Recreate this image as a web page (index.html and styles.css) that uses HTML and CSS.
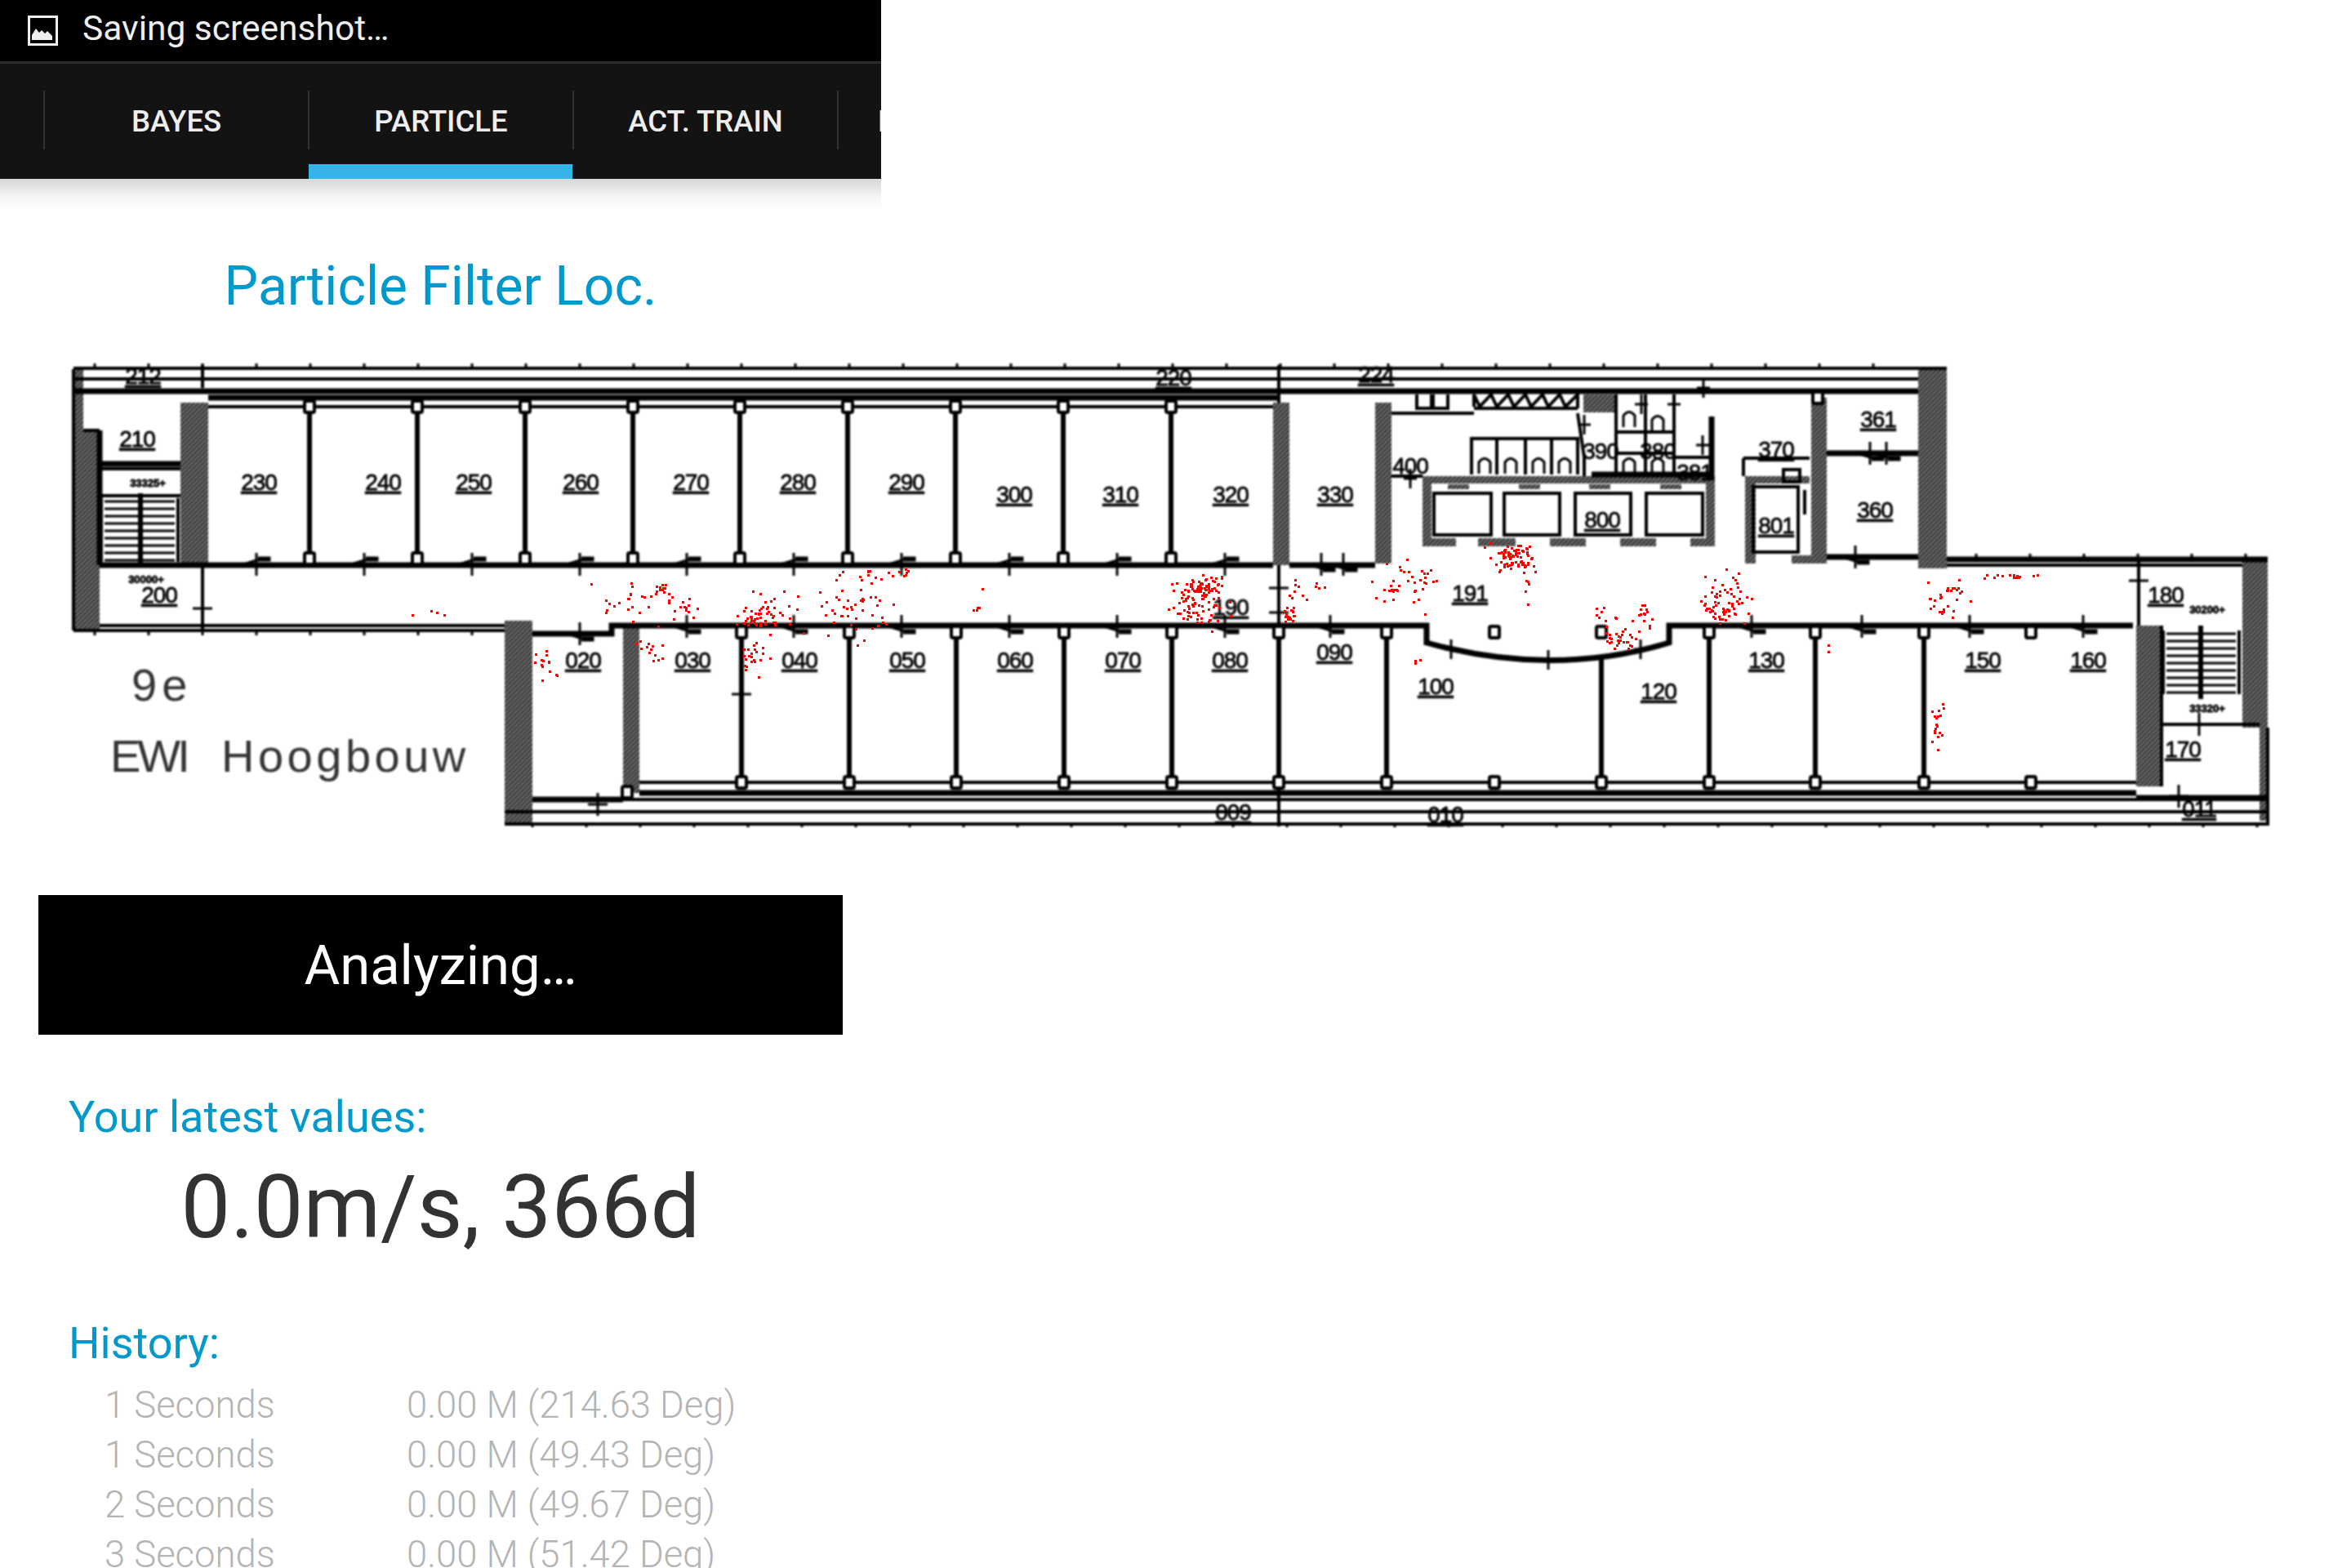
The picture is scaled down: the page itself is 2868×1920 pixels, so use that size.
FILE: index.html
```html
<!DOCTYPE html>
<html lang="en">
<head>
    <meta charset="UTF-8">
    <meta name="viewport" content="width=device-width, initial-scale=1.0">
    <title>Particle Filter Loc.</title>
    <link rel="stylesheet" href="styles.css">
</head>
<body>
<div class="screen">

    <header class="status-bar">
        <svg class="status-icon" viewBox="0 0 37 37">
            <rect x="1.5" y="1.5" width="34" height="34" fill="none" stroke="#eee" stroke-width="3"/>
            <path d="M5 31V25l5-8 4 5 3-3 4 4 3-3 6 6v5z" fill="#eee" transform="translate(0 -1)"/>
        </svg>
        <span>Saving screenshot…</span>
    </header>

    <nav class="tabs">
        <div class="tab">BAYES</div>
        <div class="tab active">PARTICLE</div>
        <div class="tab">ACT. TRAIN</div>
        <div class="tab clipped">RSSI TRAIN</div>
    </nav>
    <div class="tabs-shadow"></div>

    <h1 class="title">Particle Filter Loc.</h1>

    <svg class="plan" viewBox="0 430 2868 600" width="2868" height="600">
        <defs>
            <pattern id="hatch" width="4" height="4" patternUnits="userSpaceOnUse" patternTransform="rotate(45)">
                <rect width="4" height="4" fill="#7a7a7a"/>
                <rect width="2" height="4" fill="#2a2a2a"/>
            </pattern>
        </defs>

        <g class="drawing">
            <!-- hatched walls -->
            <g class="hatch">
                <rect x="90" y="452" width="12" height="75"/>
                <rect x="90" y="527" width="32" height="245"/>
                <rect x="221" y="493" width="34" height="201"/>
                <rect x="618" y="760" width="34" height="249"/>
                <rect x="763" y="766" width="20" height="205"/>
                <rect x="1559" y="493" width="20" height="199"/>
                <rect x="1684" y="493" width="20" height="197"/>
                <rect x="2218" y="487" width="19" height="203"/>
                <rect x="2349" y="451" width="35" height="245"/>
                <rect x="2746" y="688" width="31" height="203"/>
                <rect x="2767" y="891" width="10" height="114"/>
                <rect x="2616" y="766" width="31" height="197"/>
                <rect x="1939" y="483" width="38" height="22"/>
                <rect x="1742" y="583" width="358" height="9"/>
                <rect x="2137" y="583" width="79" height="9"/>
                <rect x="1742" y="592" width="11" height="77"/>
                <rect x="2089" y="592" width="11" height="77"/>
                <rect x="2137" y="592" width="13" height="98"/>
                <rect x="1753" y="659" width="30" height="10"/>
                <rect x="1810" y="659" width="46" height="10"/>
                <rect x="1898" y="659" width="44" height="10"/>
                <rect x="1984" y="659" width="44" height="10"/>
                <rect x="2070" y="659" width="30" height="10"/>
                <rect x="2194" y="680" width="24" height="10"/>
                <rect x="1773" y="593" width="26" height="6"/>
                <rect x="1860" y="593" width="26" height="6"/>
                <rect x="1946" y="593" width="26" height="6"/>
                <rect x="2033" y="593" width="26" height="6"/>
            </g>

            <!-- outer walls and long lines -->
            <path class="line" d="M90 451H2384M90 464H2349M90 772V452M90 772H618M122 766H618M618 1009H2777V891M618 994H2777"/>
            <path class="thick" d="M90 479H2349M255 487H1566M122 692H1559M1579 692H1684"/>
            <path class="line" d="M255 498H1559M652 979H2777M783 958H2616"/>
            <path class="thick" d="M783 971H2616M652 776H749V766H1747V787Q1900 830 2044 787V766H2612"/>
            <path class="line" d="M248 447V475M248 692V772M1566 447V493M1566 692V1012M2619 684V766M1979 483V581"/>
            <path class="thick" d="M2384 685H2777M652 979H763M2616 977H2777"/>
            <path class="line" d="M2384 692H2746M2647 766V963M2647 887H2767"/>

            <!-- rooms 200, 210 and the stairs -->
            <path class="thick" d="M122 568H221M122 692V527"/>
            <path class="line" d="M102 527H122M122 574H221M122 607H221"/>

            <!-- toilets and service rooms -->
            <path class="line" d="M1704 506H1805M1805 500H1932M1704 583H1742"/>
            <path class="line" d="M1805 498V483L1812 498L1826 483L1833 498L1847 483L1854 498L1868 483L1875 498L1889 483L1896 498L1910 483L1917 498L1932 483V500"/>
            <path class="line" d="M1735 483V500H1753V483M1755 483V500H1773V483"/>
            <path class="line" d="M1802 581V537H1932V581M1833 537V581M1868 537V581M1900 537V581M1932 506L1940 560V583"/>
            <path class="line" d="M1979 529H2050M2050 483V581M2015 483V581M1979 555H2050M2050 560H2096"/>
            <path class="thick" d="M2096 510V588M1949 581H2096"/>
            <path class="line" d="M2135 561H2216M2135 561V583M2184 575H2204V590H2184z"/>
            <rect class="box" x="1756" y="604" width="70" height="51"/>
            <rect class="box" x="1842" y="604" width="68" height="51"/>
            <rect class="box" x="1929" y="604" width="68" height="51"/>
            <rect class="box" x="2016" y="604" width="69" height="51"/>
            <rect class="box" x="2147" y="596" width="55" height="80"/>
            <path class="thick" d="M2237 555H2349M2237 682H2349"/>
            <path class="line" d="M2210 600V630"/>

            <g id="repeats"></g>

            <!-- room numbers -->
            <g class="rooms">
                <text x="168" y="547">210</text>
                <text x="195" y="738">200</text>
                <text x="317" y="600">230</text>
                <text x="469" y="600">240</text>
                <text x="580" y="600">250</text>
                <text x="711" y="600">260</text>
                <text x="846" y="600">270</text>
                <text x="977" y="600">280</text>
                <text x="1110" y="600">290</text>
                <text x="1242" y="615">300</text>
                <text x="1372" y="615">310</text>
                <text x="1507" y="615">320</text>
                <text x="1635" y="615">330</text>
                <text x="1507" y="753">190</text>
                <text x="714" y="818">020</text>
                <text x="848" y="818">030</text>
                <text x="979" y="818">040</text>
                <text x="1111" y="818">050</text>
                <text x="1243" y="818">060</text>
                <text x="1375" y="818">070</text>
                <text x="1506" y="818">080</text>
                <text x="1634" y="808">090</text>
                <text x="1758" y="850">100</text>
                <text x="1800" y="736">191</text>
                <text x="2031" y="856">120</text>
                <text x="2163" y="818">130</text>
                <text x="2428" y="818">150</text>
                <text x="2557" y="818">160</text>
                <text x="2652" y="738">180</text>
                <text x="2673" y="927">170</text>
                <text x="2300" y="523">361</text>
                <text x="2296" y="634">360</text>
                <text x="2175" y="560">370</text>
                <text x="2175" y="653">801</text>
                <text x="1962" y="646">800</text>
                <text x="1510" y="1004">009</text>
                <text x="1770" y="1007">010</text>
                <text x="2693" y="1000">011</text>
                <text x="1437" y="472">220</text>
                <text x="1685" y="468">224</text>
                <text x="175" y="470">212</text>
            </g>
            <g class="rooms plain">
                <text x="1727" y="580">400</text>
                <text x="1960" y="562">390</text>
                <text x="2030" y="562">380</text>
                <text x="2075" y="588">381</text>
            </g>
            <g class="rooms tiny">
                <text x="181" y="596">33325+</text>
                <text x="179" y="714">30000+</text>
                <text x="2703" y="751">30200+</text>
                <text x="2703" y="872">33320+</text>
            </g>
            <text class="floor nine" x="161" y="858">9e</text>
            <text class="floor ewi" x="135" y="945">EWI</text>
            <text class="floor" x="271" y="945">Hoogbouw</text>
        </g>

        <g id="particles" fill="#f00"></g>
    </svg>

    <div class="banner">Analyzing…</div>

    <h2 class="label latest">Your latest values:</h2>
    <div class="value">0.0m/s, 366d</div>

    <h2 class="label history">History:</h2>
    <div class="rows">
        <span>1 Seconds</span><span>0.00 M (214.63 Deg)</span>
        <span>1 Seconds</span><span>0.00 M (49.43 Deg)</span>
        <span>2 Seconds</span><span>0.00 M (49.67 Deg)</span>
        <span>3 Seconds</span><span>0.00 M (51.42 Deg)</span>
    </div>

</div>
<script src="plan.js"></script>
</body>
</html>
```

FILE: styles.css
```css
html, body {
    margin: 0;
    padding: 0;
    height: 1920px;
    overflow: hidden;
    background-color: #fff;
}
body {
    font-family: 'Roboto', 'Liberation Sans', sans-serif;
}
.screen {
    width: 1079px;
}

/* status bar */
.status-bar {
    height: 75px;
    background-color: #000;
    border-bottom: 3px solid #2c2c2c;
    color: #eee;
    display: flex;
    align-items: center;
    padding-left: 34px;
    font-size: 42.5px;
    font-weight: 400;
}
.status-bar span {
    margin-top: -6px;
}
.status-icon {
    width: 37px;
    height: 37px;
    margin-right: 30px;
}

/* tabs */
.tabs {
    height: 108px;
    padding: 33px 0 0 53px;
    background-color: #131313;
    display: flex;
    overflow: hidden;
}
.tab {
    position: relative;
    flex: 0 0 324px;
    box-sizing: border-box;
    height: 72px;
    padding-top: 3px;
    border-left: 2px solid #333;
    color: #eee;
    font-size: 36.5px;
    font-weight: 500;
    display: flex;
    align-items: center;
    justify-content: center;
}
.tab.active::after {
    content: '';
    position: absolute;
    left: -1px;
    right: 0;
    top: 90px;
    height: 18px;
    background-color: #33b5e5;
}
.tab.clipped {
    justify-content: flex-start;
    padding-left: 48px;
    white-space: nowrap;
}
.tabs-shadow {
    height: 36px;
    background: linear-gradient(#d6d6d6, #f4f4f4 60%, #fff);
}

/* headings */
.title {
    margin: 58px 0 0;
    font-size: 66px;
    line-height: 76px;
    font-weight: 400;
    color: #0099cc;
    text-align: center;
}
.label {
    margin: 0 0 0 84px;
    font-size: 54px;
    line-height: 64px;
    font-weight: 400;
    color: #0099cc;
}
.latest {
    margin-top: 69px;
}
.history {
    margin-top: 71px;
}
.value {
    margin-top: 14px;
    font-size: 108px;
    line-height: 128px;
    font-weight: 400;
    color: #333;
    text-align: center;
}

/* floor plan */
.plan {
    display: block;
    margin-top: 41px;
    overflow: visible;
}
.drawing {
    filter: blur(0.8px);
}
.hatch rect {
    fill: url(#hatch);
}
.line, .thick, .box {
    fill: none;
    stroke: #000;
}
.line {
    stroke-width: 4;
}
.thick {
    stroke-width: 7;
}
.box {
    stroke-width: 4;
}
.divider {
    stroke: #000;
    stroke-width: 6;
}
.post {
    fill: #fff;
    stroke: #000;
    stroke-width: 4;
}
.tick {
    stroke: #000;
    stroke-width: 3;
}
.door {
    fill: none;
    stroke: #000;
    stroke-width: 3;
}
.rooms text {
    font-family: 'Liberation Sans', sans-serif;
    font-size: 28px;
    text-anchor: middle;
    text-decoration: underline;
    fill: #000;
    stroke: #000;
    stroke-width: 0.8;
    letter-spacing: -1px;
}
.rooms.plain text {
    text-decoration: none;
}
.rooms.tiny text {
    font-size: 13px;
    font-weight: bold;
    text-decoration: none;
    letter-spacing: 0;
}
.floor {
    font-family: 'Liberation Sans', sans-serif;
    font-size: 56px;
    letter-spacing: 4.5px;
    fill: #333;
}
.floor.ewi {
    letter-spacing: -4px;
}
.floor.nine {
    letter-spacing: 6px;
}

/* analyzing banner */
.banner {
    margin: 66px 47px 0 47px;
    height: 171px;
    background-color: #000;
    color: #fff;
    font-size: 67px;
    font-weight: 400;
    display: flex;
    align-items: center;
    justify-content: center;
}

/* history */
.rows {
    margin: 13px 0 0 128px;
    display: grid;
    grid-template-columns: 370px 1fr;
    font-size: 45.4px;
    line-height: 61px;
    font-weight: 300;
    color: #b4b4b4;
}
```

FILE: plan.js
```js
// repeating bits of the floor plan and the particle cloud
var repeats = document.getElementById('repeats');
var particles = document.getElementById('particles');
var out = '';

function line(x1, y1, x2, y2, cls) {
    out += '<line x1="' + x1 + '" y1="' + y1 + '" x2="' + x2 + '" y2="' + y2 + '" class="' + cls + '"/>';
}
function post(x, y) {
    out += '<rect x="' + (x - 6) + '" y="' + (y - 7) + '" width="12" height="14" rx="2" class="post"/>';
}
function door(x, y, dir) {
    line(x, y - 14, x, y + 14, 'tick');
    if (dir) {
        out += '<path d="M' + (x - 16) + ' ' + y + 'L' + x + ' ' + (y + 5 * dir) + 'H' + (x + 16) + 'V' + (y + 8 * dir) + 'H' + (x + 2) + '" class="door"/>';
    } else {
        line(x - 12, y, x + 12, y, 'tick');
    }
}
// toilet door with its small arch
function arch(x, y) {
    out += '<path d="M' + (x - 7) + ' ' + (y + 18) + 'V' + (y + 4) + 'Q' + x + ' ' + (y - 5) + ' ' + (x + 7) + ' ' + (y + 4) + 'V' + (y + 18) + '" class="door"/>';
}

// upper offices
[379, 511, 643, 775, 906, 1038, 1170, 1302, 1434].forEach(function (x) {
    line(x, 498, x, 690, 'divider');
    post(x, 498);
    post(x, 684);
});
// lower offices
[908, 1040, 1171, 1303, 1435, 1566, 1698, 1961, 2093, 2223, 2356].forEach(function (x) {
    line(x, x === 1961 ? 806 : 766, x, 960, 'divider');
    post(x, 958);
    if (x !== 1961) post(x, 774);
});
post(1961, 774);
post(1830, 774);
post(1830, 958);
post(2487, 774);
post(2487, 958);
post(768, 970);
post(2226, 487);

// doors on the corridor
[314, 446, 578, 710, 841, 972, 1104, 1236, 1368, 1500].forEach(function (x) {
    door(x, 691, -1);
});
[841, 972, 1104, 1236, 1368, 1500, 1629, 2145, 2280, 2412, 2551].forEach(function (x) {
    door(x, 767, 1);
});
door(710, 776, 1);
door(2272, 682, 1);
door(1618, 691, 1);
door(1645, 691, 1);
door(2290, 555, 1);
door(2310, 555, 1);
[[1727, 586], [1777, 795], [1896, 808], [2009, 795], [2086, 475], [1940, 520], [2010, 495], [2050, 495], [2085, 545]].forEach(function (d) {
    line(d[0] - 8, d[1], d[0] + 8, d[1], 'tick');
    line(d[0], d[1] - 12, d[0], d[1] + 12, 'tick');
});
door(248, 745, 0);
door(908, 850, 0);
door(2619, 711, 0);
door(1566, 720, 0);
door(1566, 750, 0);
door(732, 985, 0);
door(2693, 887, 0);
door(2668, 975, 0);

// arches in the toilet block
[1818, 1850, 1884, 1916, 1995, 2030, 2030].forEach(function (x, i) {
    arch(x, i > 5 ? 510 : 562);
});
arch(1995, 505);

// ticks on the outside of the building
for (var x = 116; x < 2350; x += 66) line(x, 445, x, 451, 'tick');
for (x = 116; x < 620; x += 66) line(x, 772, x, 778, 'tick');
for (x = 652; x < 2780; x += 66) line(x, 1007, x, 1013, 'tick');
for (x = 2420; x < 2780; x += 66) line(x, 678, x, 685, 'tick');

// stairs at both ends
[[124, 218, 172, 610], [2649, 2742, 2695, 772]].forEach(function (s) {
    line(s[2], s[3] - 6, s[2], s[3] + 84, 'divider');
    line(s[0], s[3], s[0], s[3] + 78, 'line');
    line(s[1], s[3], s[1], s[3] + 78, 'line');
    for (var y = s[3] + 4; y < s[3] + 78; y += 9) line(s[0] + 4, y, s[1] - 4, y, 'tick');
});

repeats.innerHTML = out;

// small seeded generator so that the cloud is the same on every load
var seed = 12345;
function rnd() {
    seed = (seed * 16807) % 2147483647;
    return seed / 2147483647;
}
function gauss() {
    return (rnd() + rnd() + rnd() - 1.5) / 0.5;
}

var clusters = [
    // x, y, count, spread x, spread y
    [512, 753, 4, 20, 2], [663, 812, 12, 6, 10], [680, 827, 2, 1, 1], [755, 736, 18, 16, 11],
    [809, 720, 10, 4, 3], [818, 738, 14, 20, 12], [840, 749, 8, 8, 8], [795, 797, 14, 8, 8],
    [932, 753, 32, 13, 6], [938, 750, 26, 26, 14], [927, 799, 22, 11, 16], [1043, 738, 45, 20, 20],
    [1066, 703, 12, 18, 6], [1107, 705, 5, 5, 5], [1196, 745, 4, 4, 3], [1202, 720, 1, 0, 0],
    [1468, 720, 70, 13, 8], [1468, 743, 55, 16, 12], [1577, 751, 16, 4, 5], [1589, 722, 8, 8, 7],
    [1617, 715, 4, 6, 3], [1721, 715, 35, 20, 16], [1704, 724, 8, 3, 3], [1732, 808, 3, 5, 2],
    [1850, 682, 80, 14, 9], [1868, 715, 5, 3, 10], [1981, 776, 32, 9, 11], [1960, 757, 6, 6, 6],
    [2012, 749, 14, 5, 10], [2107, 741, 55, 18, 9], [2107, 715, 14, 14, 9], [2381, 738, 22, 14, 14],
    [2395, 722, 9, 5, 2], [2458, 705, 14, 20, 2], [2372, 883, 18, 3, 16], [2240, 797, 2, 2, 8]
];
var dots = '';
clusters.forEach(function (c) {
    for (var i = 0; i < c[2]; i++) {
        var px = Math.round(c[0] + gauss() * c[3]);
        var py = Math.round(c[1] + gauss() * c[4]);
        dots += 'M' + px + ' ' + py + 'h3v3h-3z';
    }
});
particles.innerHTML = '<path d="' + dots + '"/>';
```
